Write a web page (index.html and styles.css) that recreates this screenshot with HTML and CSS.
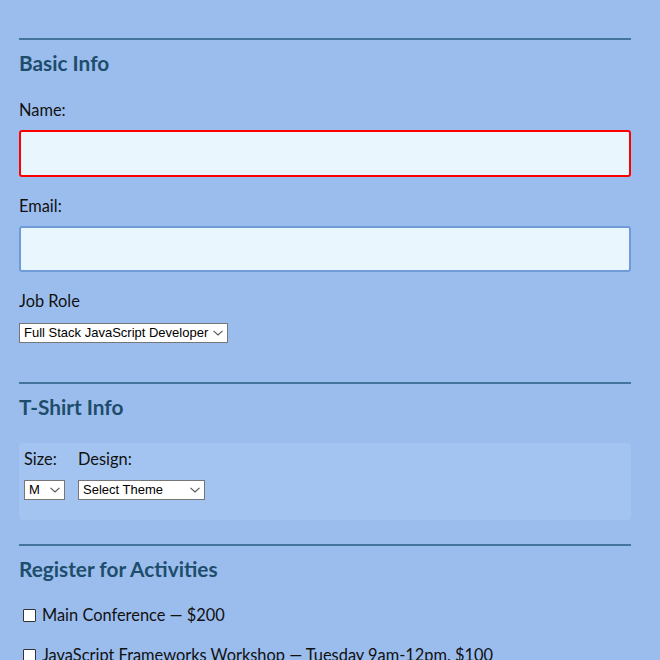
FILE: index.html
```html
<!DOCTYPE html>
<html lang="en">
<head>
<meta charset="utf-8">
<title>Register</title>
<link rel="stylesheet" href="styles.css">
</head>
<body>
<form class="form">
  <section class="section">
    <hr class="rule">
    <h2 class="title">Basic Info</h2>
    <label class="label" for="name">Name:</label>
    <input class="field field-error" id="name" type="text">
    <label class="label label-email" for="mail">Email:</label>
    <input class="field field-email" id="mail" type="email">
    <label class="label label-job" for="title">Job Role</label>
    <select class="select select-job" id="title">
      <option>Full Stack JavaScript Developer</option>
    </select>
  </section>

  <section class="section section-shirt">
    <hr class="rule">
    <h2 class="title">T-Shirt Info</h2>
    <div class="shirt-box">
      <div class="shirt-col">
        <label class="shirt-label" for="size">Size:</label>
        <select class="select select-size" id="size"><option>M</option></select>
      </div>
      <div class="shirt-col">
        <label class="shirt-label" for="design">Design:</label>
        <select class="select select-design" id="design"><option>Select Theme</option></select>
      </div>
    </div>
  </section>

  <section class="section section-activities">
    <hr class="rule">
    <h2 class="title">Register for Activities</h2>
    <label class="activity"><input class="check" type="checkbox">Main Conference — $200</label>
    <label class="activity"><input class="check" type="checkbox">JavaScript Frameworks Workshop — Tuesday 9am-12pm, $100</label>
  </section>
</form>
</body>
</html>
```

FILE: styles.css
```css
html, body {
  margin: 0;
  padding: 0;
}

body {
  background: #9bbdee;
  font-family: "Lato", "Noto Sans", sans-serif;
  color: #111;
  overflow: hidden;
}

.form {
  width: 612px;
  padding: 38px 0 0 19px;
}

.section {
  display: flex;
  flex-direction: column;
  align-items: flex-start;
}

.rule {
  width: 100%;
  height: 2px;
  margin: 0;
  border: none;
  background: #44739c;
}

.title {
  margin: 11px 0 0;
  font-size: 20.8px;
  line-height: 24px;
  font-weight: 700;
  color: #1e4d6c;
}

.label {
  margin-top: 25px;
  font-size: 16.4px;
  line-height: 20px;
}

.label-email,
.label-job {
  margin-top: 19px;
}

.field {
  box-sizing: border-box;
  width: 100%;
  height: 47px;
  margin-top: 10px;
  border: 2px solid #6f9cd8;
  border-radius: 3px;
  background: #eaf6fd;
  font-size: 15px;
}

.field-error {
  border-color: #ff0000;
}

.field-email {
  margin-top: 10px;
  height: 46px;
}

.select {
  -webkit-appearance: none;
  appearance: none;
  box-sizing: border-box;
  height: 20px;
  margin: 0;
  padding: 0 14px 0 4px;
  border: 1px solid #767676;
  border-radius: 0;
  background: #fff url("data:image/svg+xml;utf8,<svg xmlns='http://www.w3.org/2000/svg' width='10' height='6' viewBox='0 0 10 6'><path d='M0.5 0.8L5 5L9.5 0.8' fill='none' stroke='%23555' stroke-width='1.1'/></svg>") no-repeat right 4px center;
  color: #000;
  font-family: "Liberation Sans", Arial, sans-serif;
  font-size: 13px;
  line-height: 18px;
}

.select-job {
  width: 209px;
  margin-top: 12px;
}

.section-shirt {
  margin-top: 39px;
}

.shirt-box {
  box-sizing: border-box;
  width: 100%;
  height: 77px;
  margin-top: 24px;
  padding: 6px 5px 0;
  display: flex;
  gap: 13px;
  background: #a3c4f0;
  border-radius: 4px;
}

.shirt-col {
  display: flex;
  flex-direction: column;
  align-items: flex-start;
}

.shirt-label {
  font-size: 16.4px;
  line-height: 20px;
}

.select-size {
  width: 41px;
  margin-top: 11px;
}

.select-design {
  width: 127px;
  margin-top: 11px;
}

.section-activities {
  margin-top: 24px;
}

.activity {
  display: flex;
  align-items: center;
  margin-top: 24px;
  font-size: 16.4px;
  line-height: 20px;
  white-space: nowrap;
}

.activity + .activity {
  margin-top: 20px;
}

.check {
  -webkit-appearance: none;
  appearance: none;
  box-sizing: border-box;
  width: 13px;
  height: 13px;
  margin: 0 6px 0 4px;
  border: 1px solid #333;
  border-radius: 1px;
  background: #fff;
}
```
